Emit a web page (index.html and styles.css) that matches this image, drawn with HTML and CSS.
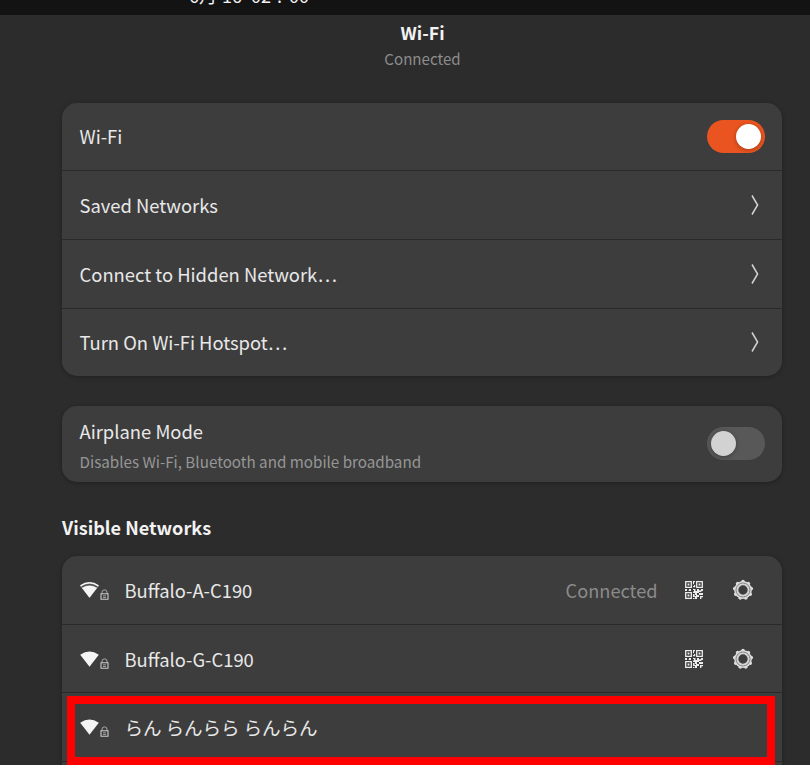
FILE: index.html
```html
<!DOCTYPE html>
<html lang="en">
<head>
<meta charset="utf-8">
<title>Wi-Fi</title>
<link rel="stylesheet" href="styles.css">
</head>
<body>
<svg class="defs" aria-hidden="true">
  <symbol id="chevron" viewBox="0 0 10 22"><path d="M2 1.5 7.6 11 2 20.5" fill="none" stroke="#d2d2d2" stroke-width="1.5"/></symbol>
  <symbol id="lock" viewBox="0 0 9 11"><path d="M2 5V3.2Q2 .9 4.5 .9T7 3.2V5" fill="none" stroke="#aaa" stroke-width="1"/><path d="M1 4.8H8V10.3H1Z" fill="none" stroke="#ccc" stroke-width="1.1"/><path d="M3 6.8H6M3 8.5H6" stroke="#aaa" stroke-width=".9"/></symbol>
  <symbol id="wifi" viewBox="0 0 20 16"><path d="M.2 3.7Q9.5-2.9 18.8 3.7L9.5 15.8Z" fill="#f5f5f5"/></symbol>
  <symbol id="wifi-good" viewBox="0 0 20 16"><path d="M.2 3.7Q9.5-2.9 18.8 3.7L9.5 15.8Z" fill="#a0a0a0"/><path d="M.5 3.8Q9.5-2.2 18.5 3.8" fill="none" stroke="#f5f5f5" stroke-width="1.4"/><path d="M2 4.9Q9.5 0 17 4.9" fill="none" stroke="#505050" stroke-width="1.4"/><path d="M2 6Q9.5 1.5 17 6L9.5 15.8Z" fill="#f5f5f5"/></symbol>
  <symbol id="qr" viewBox="0 0 18 18"><g fill="none" stroke="#ececec" stroke-width="1.3"><path d="M.7.7H6.3V6.3H.7ZM11.7.7H17.3V6.3H11.7ZM.7 11.7H6.3V17.3H.7Z"/></g><path fill="#ececec" d="M2.6 2.6h1.8v1.8H2.6ZM13.6 2.6h1.8v1.8h-1.8ZM2.6 13.6h1.8v1.8H2.6ZM8 .1h2v1.2H9v2H8ZM9 4h1.2v2.3H8V5h1ZM0 8h2v1.2h2V8h2v2H3.5v-.8H2V10H0ZM8 8h2.5v2H12V8h2v1.3h2V8h2v2h-1.6v1H14v1h-2v2h-2v-2H8v-1.5h1V9H8ZM8 13h1.5v2H11v-1h3v-2h2v2h-2v2h-2v2h-2v-2H8ZM16 12h2v2h-2ZM15 15h3v1.2h-1.6V18H15ZM8 17h1.5v1H8Z"/></symbol>
  <symbol id="gear" viewBox="-11 -11 22 22"><g fill="#dcdcdc"><circle r="8.9"/><g id="teeth"><circle cy="-8.4" r="1.8"/><circle cy="-8.4" r="1.8" transform="rotate(40)"/><circle cy="-8.4" r="1.8" transform="rotate(80)"/></g><use href="#teeth" transform="rotate(120)"/><use href="#teeth" transform="rotate(240)"/></g><circle r="7" fill="none" stroke="#686868" stroke-width=".8"/><circle r="5.4" fill="#3d3d3d" stroke="#d4d4d4" stroke-width="1.5"/></symbol>
</svg>
<main class="window">
  <div class="topbar"><div class="clock"><span>6月</span><span>16</span><span>02</span><span>:</span><span>00</span></div></div>
  <header class="header"><h1>Wi-Fi</h1><p>Connected</p></header>
  <section class="card">
    <div class="row"><span class="label">Wi-Fi</span><span class="switch on"></span></div>
    <div class="row"><span class="label">Saved Networks</span><svg class="chevron"><use href="#chevron"/></svg></div>
    <div class="row"><span class="label">Connect to Hidden Network…</span><svg class="chevron"><use href="#chevron"/></svg></div>
    <div class="row"><span class="label">Turn On Wi-Fi Hotspot…</span><svg class="chevron"><use href="#chevron"/></svg></div>
  </section>
  <section class="card airplane">
    <div class="row"><div class="label"><div class="title">Airplane Mode</div><div class="sub">Disables Wi-Fi, Bluetooth and mobile broadband</div></div><span class="switch"></span></div>
  </section>
  <h2>Visible Networks</h2>
  <section class="card networks">
    <div class="row"><svg class="wifi"><use href="#wifi-good"/></svg><svg class="lock"><use href="#lock"/></svg><span class="label">Buffalo-A-C190</span><span class="status">Connected</span><svg class="qr"><use href="#qr"/></svg><svg class="gear"><use href="#gear"/></svg></div>
    <div class="row"><svg class="wifi"><use href="#wifi"/></svg><svg class="lock"><use href="#lock"/></svg><span class="label">Buffalo-G-C190</span><svg class="qr"><use href="#qr"/></svg><svg class="gear"><use href="#gear"/></svg></div>
    <div class="row"><svg class="wifi"><use href="#wifi"/></svg><svg class="lock"><use href="#lock"/></svg><span class="label kana" lang="ja">らん らんらら らんらん</span><div class="highlight"></div></div>
    <div class="row"></div>
  </section>
</main>
</body>
</html>
```
FILE: styles.css
```css
* { box-sizing: border-box; }
html { background: #fff; }
body { margin: 0; font-family: "Noto Sans CJK JP", "Noto Sans", sans-serif; color: #e8e8e8; }
.defs { position: absolute; width: 0; height: 0; }
.window { width: 810px; height: 765px; overflow: hidden; background: #2c2c2c; }
.topbar { height: 15px; background: #131313; overflow: hidden; }
.clock { display: flex; margin: -17px 0 0 189px; font-size: 18px; line-height: 24px; color: #f2f2f2; }
.clock span:nth-child(2) { margin-left: 5px; }
.clock span:nth-child(3) { margin-left: 9px; }
.clock span:nth-child(4) { margin-left: 6px; }
.clock span:nth-child(5) { margin-left: 7px; }
.header { height: 87.5px; padding: 4px 0 0 35px; text-align: center; }
h1 { margin: 0; font-size: 17.8px; line-height: 26px; font-weight: 700; color: #f2f2f2; }
.header p { margin: 1px 0 0; font-size: 15.1px; line-height: 24px; color: #8d8d8d; }
.card { width: 720px; margin-left: 62px; border-radius: 15px; background: #3d3d3d; box-shadow: 0 1px 4px rgba(0, 0, 0, .28); overflow: hidden; }
.row { position: relative; display: flex; align-items: center; height: 68.7px; padding: 0 17.5px; border-bottom: 1.5px solid #2a2a2a; }
.row:last-child { height: 67.5px; border-bottom: 0; }
.label { flex: 1; font-size: 18.4px; line-height: 28px; white-space: nowrap; }
.switch { width: 58px; height: 33px; border-radius: 17px; padding: 4px; background: #585858; }
.switch::before { content: ""; display: block; width: 25px; height: 25px; border-radius: 50%; background: #d2d2d2; box-shadow: 0 1px 4px rgba(0, 0, 0, .3); }
.switch.on { background: #e95420; }
.switch.on::before { margin-left: 25px; background: #fff; }
.chevron { width: 10px; height: 22px; margin-right: 5px; }
.airplane { margin-top: 30px; height: 76px; }
.airplane .row { height: 76px; }
.airplane .label { padding-top: 2px; }
.airplane .switch { margin-top: -1px; }
.title { line-height: 28px; }
.sub { margin-top: 3px; font-size: 15.2px; line-height: 26px; color: #969696; }
h2 { margin: 30px 0 0 62px; height: 44px; font-size: 18.1px; line-height: 30px; font-weight: 700; color: #f2f2f2; }
.wifi { width: 20px; height: 16px; }
.lock { width: 9px; height: 11px; margin: 9px 16px 0 0; }
.status { margin-right: 27px; font-size: 18.2px; line-height: 28px; color: #8b8b8b; }
.qr { width: 18px; height: 18px; margin-right: 29px; }
.gear { width: 22px; height: 22px; margin-right: 11px; }
.kana { font-size: 18.6px; font-weight: 400; padding-left: 0; letter-spacing: -.1px; }
.highlight { position: absolute; left: 4.5px; top: 3px; width: 708.5px; height: 69px; border: 8px solid #f00; z-index: 1; }
```
